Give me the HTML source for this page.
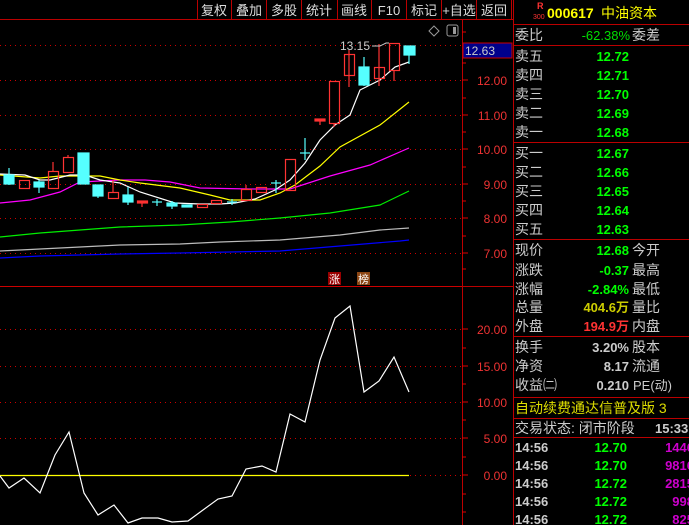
<!DOCTYPE html>
<html><head><meta charset="utf-8"><style>
*{margin:0;padding:0}
body{width:689px;height:525px;background:#000;overflow:hidden;position:relative;font-family:"Liberation Sans","Noto Sans CJK SC",sans-serif;}
svg{position:absolute;left:0;top:0}
text{font-family:"Liberation Sans","Noto Sans CJK SC",sans-serif}
</style></head><body>
<svg width="689" height="525" viewBox="0 0 689 525">
<g stroke="#b00" stroke-width="1">
<line x1="0" y1="19.5" x2="462" y2="19.5"/>
<line x1="197.5" y1="0" x2="197.5" y2="19"/><line x1="231.5" y1="0" x2="231.5" y2="19"/><line x1="266.5" y1="0" x2="266.5" y2="19"/><line x1="301.5" y1="0" x2="301.5" y2="19"/><line x1="337.5" y1="0" x2="337.5" y2="19"/><line x1="371.5" y1="0" x2="371.5" y2="19"/><line x1="406.5" y1="0" x2="406.5" y2="19"/><line x1="441.5" y1="0" x2="441.5" y2="19"/><line x1="476.5" y1="0" x2="476.5" y2="19"/><line x1="511.5" y1="0" x2="511.5" y2="19"/>
<line x1="462.5" y1="19" x2="462.5" y2="525"/>
<line x1="462" y1="19.5" x2="513" y2="19.5"/>
<line x1="0" y1="286.5" x2="462" y2="286.5" stroke="#c00"/>
<line x1="462" y1="286.5" x2="513" y2="286.5"/>
<line x1="513.5" y1="0" x2="513.5" y2="525"/>
</g>
<g fill="#ddd" font-size="13" text-anchor="middle">
<text x="214" y="15">复权</text><text x="249" y="15">叠加</text><text x="284" y="15">多股</text><text x="319" y="15">统计</text><text x="354" y="15">画线</text><text x="389" y="15">F10</text><text x="424" y="15">标记</text><text x="459" y="15">+自选</text><text x="494" y="15">返回</text>
</g>
<path d="M434 26 l5 5 l-5 5 l-5 -5z" fill="none" stroke="#999"/>
<rect x="447" y="25" width="11" height="11" rx="2" fill="none" stroke="#999"/><rect x="453" y="27" width="3" height="7" fill="#999"/>
<g stroke="#c00" stroke-dasharray="1,4" stroke-width="1">
<line x1="0" y1="45.5" x2="462" y2="45.5"/><line x1="0" y1="80.5" x2="462" y2="80.5"/><line x1="0" y1="115.5" x2="462" y2="115.5"/><line x1="0" y1="149.5" x2="462" y2="149.5"/><line x1="0" y1="184.5" x2="462" y2="184.5"/><line x1="0" y1="218.5" x2="462" y2="218.5"/><line x1="0" y1="253.5" x2="462" y2="253.5"/>
<line x1="0" y1="329.5" x2="462" y2="329.5"/><line x1="0" y1="366.5" x2="462" y2="366.5"/><line x1="0" y1="402.5" x2="462" y2="402.5"/><line x1="0" y1="438.5" x2="462" y2="438.5"/><line x1="410" y1="475.5" x2="462" y2="475.5"/>
</g>
<g stroke="#d00"><path d="M462 32h4M462 63h4M462 80h6M462 98h4M462 115h6M462 132h4M462 149h6M462 167h4M462 184h6M462 201h4M462 218h6M462 236h4M462 253h6M462 269h4M462 329h6M462 348h4M462 366h6M462 384h4M462 402h6M462 420h4M462 438h6M462 457h4M462 475h6M462 494h4M462 512h4"/></g>
<g fill="#e33" font-size="12" text-anchor="end">
<text x="507" y="85">12.00</text><text x="507" y="120">11.00</text><text x="507" y="154">10.00</text><text x="507" y="189">9.00</text><text x="507" y="223">8.00</text><text x="507" y="258">7.00</text>
<text x="507" y="334">20.00</text><text x="507" y="371">15.00</text><text x="507" y="407">10.00</text><text x="507" y="443">5.00</text><text x="507" y="480">0.00</text>
</g>
<rect x="463" y="43" width="49" height="15" fill="#00008b" stroke="#c00"/>
<text x="465" y="55" fill="#ccc" font-size="12">12.63</text>
<g fill="none" stroke-width="1.2">
<polyline stroke="#00f" points="0,258 40,256 80,255 120,254 180,253 230,252 280,251 340,246 400,241 409,240"/>
<polyline stroke="#bbb" points="0,251 40,249 80,247 120,245 180,244 220,242 280,240 340,235 380,230 409,228"/>
<polyline stroke="#0e0" points="0,237 40,233 80,230 120,227 180,225 230,222 280,218 330,213 380,205 409,191"/>
<polyline stroke="#f0f" points="0,203 30,200 60,192 80,182 100,181 120,180 145,180 170,182 200,188 250,189 290,189 330,176 370,165 409,148"/>
<polyline stroke="#ff0" points="0,175 40,178 60,176 85,176 100,176 120,180 140,183 180,188 210,195 230,200 260,200 280,193 295,185 320,166 340,147 380,125 409,102"/>
<polyline stroke="#fff" points="0,174 25,175 40,180 50,180 70,175 85,175 100,180 120,183 140,192 175,203 200,204 220,204 235,203 255,199 275,190 290,180 305,163 320,140 335,125 350,115 360,90 380,80 395,67 409,62"/>
</g>
<g stroke-width="1.2">
<g stroke="#5ff" fill="#5ff">
<line x1="9" y1="168" x2="9" y2="185"/><rect x="4" y="175" width="10" height="9"/>
<line x1="39" y1="180" x2="39" y2="193"/><rect x="34" y="182" width="10" height="5"/>
<rect x="78" y="153" width="11" height="31"/>
<line x1="98" y1="185" x2="98" y2="198"/><rect x="93" y="185" width="10" height="11"/>
<line x1="128" y1="187" x2="128" y2="205"/><rect x="123" y="195" width="10" height="7"/>
<line x1="157" y1="199" x2="157" y2="206"/><line x1="152" y1="202" x2="162" y2="202"/>
<line x1="172" y1="201" x2="172" y2="209"/><rect x="167" y="203" width="10" height="3"/>
<rect x="182" y="205" width="10" height="2"/>
<line x1="232" y1="199" x2="232" y2="205"/><line x1="227" y1="202" x2="237" y2="202"/>
<line x1="276" y1="180" x2="276" y2="193"/><line x1="271" y1="183" x2="281" y2="183"/>
<line x1="305" y1="138" x2="305" y2="160"/><line x1="300" y1="153" x2="310" y2="153"/>
<line x1="364" y1="57" x2="364" y2="86"/><rect x="359" y="67" width="10" height="18"/>
<line x1="409" y1="55" x2="409" y2="64"/><rect x="404" y="46" width="11" height="9"/>
</g>
<g stroke="#f33" fill="none">
<rect x="19.5" y="180.5" width="10" height="8"/>
<line x1="53" y1="162" x2="53" y2="171"/><rect x="48.5" y="171.5" width="10" height="17"/>
<line x1="68" y1="155" x2="68" y2="158"/><rect x="63.5" y="157.5" width="10" height="15"/>
<line x1="113" y1="180" x2="113" y2="192"/><rect x="108.5" y="192.5" width="10" height="6"/>
<line x1="142" y1="203" x2="142" y2="207"/><rect x="137.5" y="201" width="10" height="2" fill="#f33"/>
<rect x="197.5" y="204.5" width="10" height="3"/>
<rect x="211.5" y="200.5" width="10" height="3"/>
<line x1="246" y1="185" x2="246" y2="189"/><rect x="241.5" y="189.5" width="10" height="11"/>
<rect x="256.5" y="187.5" width="10" height="5"/>
<rect x="285.5" y="159.5" width="10" height="31"/>
<line x1="320" y1="121" x2="320" y2="125"/><rect x="315" y="119" width="10" height="2" fill="#f33"/>
<line x1="334" y1="123" x2="334" y2="127"/><rect x="329.5" y="81.5" width="10" height="42"/>
<line x1="349" y1="50" x2="349" y2="87"/><rect x="344.5" y="54.5" width="10" height="21"/>
<line x1="379" y1="44" x2="379" y2="86"/><rect x="374.5" y="67.5" width="10" height="11"/>
<line x1="394" y1="70" x2="394" y2="81"/><rect x="389.5" y="43.5" width="10" height="27"/>
</g>
</g>
<text x="340" y="50" fill="#ccc" font-size="12">13.15</text>
<path d="M372 46 h8 l6 -3 h3" stroke="#ccc" fill="none"/>
<rect x="328" y="272" width="13" height="13" fill="#900"/><text x="329" y="283" fill="#fff" font-size="11">涨</text>
<rect x="357" y="272" width="13" height="13" fill="#8b4513"/><text x="358" y="283" fill="#fff" font-size="11">榜</text>
<line x1="0" y1="475.5" x2="409" y2="475.5" stroke="#ff0" stroke-width="1.2"/>
<polyline fill="none" stroke="#fff" stroke-width="1.2" points="0,476 9,488 24,478 40,493 55,455 69,432 84,493 98,515 114,505 128,523 142,518 158,518 172,522 188,521 203,510 218,499 232,496 246,469 262,466 276,472 290,414 305,422 320,360 335,318 350,306 364,392 379,381 394,357 409,392"/>
<g stroke="#b00"><path d="M513 24.5h176M513 45.5h176M513 142.5h176M513 239.5h176M513 336.5h176M513 397.5h176M513 418.5h176M513 437.5h176"/></g>
<text x="537" y="9" fill="#f33" font-size="9" font-weight="bold">R</text>
<text x="533" y="19" fill="#f33" font-size="7">300</text>
<text x="547" y="18" fill="#ff0" font-size="14" font-weight="bold">000617</text>
<text x="601" y="18" fill="#ff0" font-size="14">中油资本</text>
<g font-size="14" fill="#ccc">
<text x="515" y="40">委比</text><text x="632" y="40">委差</text>
<text x="515" y="61">卖五</text><text x="515" y="80">卖四</text><text x="515" y="99">卖三</text><text x="515" y="118">卖二</text><text x="515" y="137">卖一</text>
<text x="515" y="158">买一</text><text x="515" y="177">买二</text><text x="515" y="196">买三</text><text x="515" y="215">买四</text><text x="515" y="234">买五</text>
<text x="515" y="255">现价</text><text x="632" y="255">今开</text>
<text x="515" y="275">涨跌</text><text x="632" y="275">最高</text>
<text x="515" y="294">涨幅</text><text x="632" y="294">最低</text>
<text x="515" y="312">总量</text><text x="632" y="312">量比</text>
<text x="515" y="331">外盘</text><text x="632" y="331">内盘</text>
<text x="515" y="352">换手</text><text x="632" y="352">股本</text>
<text x="515" y="371">净资</text><text x="632" y="371">流通</text>
<text x="515" y="390">收益㈡</text><text x="633" y="390" font-size="13">PE(动)</text>
<text x="515" y="433">交易状态: 闭市阶段</text>
</g>
<text x="515" y="413" fill="#dd0" font-size="14">自动续费通达信普及版  3</text>
<g font-size="13" font-weight="bold" text-anchor="end">
<text x="630" y="40" fill="#0d0" font-weight="normal">-62.38%</text>
<g fill="#0f0"><text x="629" y="61">12.72</text><text x="629" y="80">12.71</text><text x="629" y="99">12.70</text><text x="629" y="118">12.69</text><text x="629" y="137">12.68</text>
<text x="629" y="158">12.67</text><text x="629" y="177">12.66</text><text x="629" y="196">12.65</text><text x="629" y="215">12.64</text><text x="629" y="234">12.63</text>
<text x="629" y="255">12.68</text><text x="629" y="275">-0.37</text><text x="629" y="294">-2.84%</text></g>
<text x="629" y="312" fill="#cc0">404.6万</text>
<text x="629" y="331" fill="#f33">194.9万</text>
<g fill="#ccc"><text x="629" y="352">3.20%</text><text x="629" y="371">8.17</text><text x="629" y="390">0.210</text><text x="655" y="433" text-anchor="start">15:33</text></g>
</g>
<g font-size="13" font-weight="bold">
<g fill="#ccc"><text x="515" y="452">14:56</text><text x="515" y="470">14:56</text><text x="515" y="488">14:56</text><text x="515" y="506">14:56</text><text x="515" y="524">14:56</text></g>
<g fill="#0f0" text-anchor="end"><text x="627" y="452">12.70</text><text x="627" y="470">12.70</text><text x="627" y="488">12.72</text><text x="627" y="506">12.72</text><text x="627" y="524">12.72</text></g>
<g fill="#c0c" text-anchor="end"><text x="694" y="452">1446</text><text x="694" y="470">9816</text><text x="694" y="488">2815</text><text x="694" y="506">998</text><text x="694" y="524">825</text></g>
</g>
</svg>
</body></html>
